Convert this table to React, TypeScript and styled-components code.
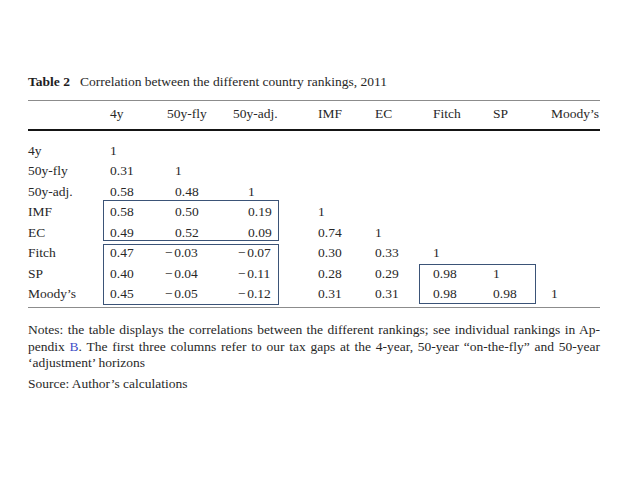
import React from "react";
import styled, { createGlobalStyle } from "styled-components";

const Global = createGlobalStyle`
  html, body { margin: 0; padding: 0; background: #ffffff; }
  body {
    font-family: "Liberation Serif", "Times New Roman", serif;
    color: #282828;
  }
`;

const COLS = "82px 57px 66px 85px 57px 58px 60px 58px 49px";

const Page = styled.div`
  width: 638px;
  height: 479px;
  box-sizing: border-box;
  padding: 74px 0 0 28px;
`;

const Figure = styled.div`
  width: 572px;
`;

const Caption = styled.div`
  font-size: 13.5px;
  line-height: 16px;
  margin-bottom: 10px;
  white-space: nowrap;
`;

const CaptionLabel = styled.span`
  font-weight: bold;
  margin-right: 10px;
  color: #1e1e1e;
`;

const HeaderRow = styled.div`
  display: grid;
  grid-template-columns: ${COLS};
  border-top: 1px solid #8c8c8c;
  border-bottom: 2px solid #151515;
  padding: 5px 0 7px;
  font-size: 13.5px;
  line-height: 16px;
`;

const HeadCell = styled.div`
  white-space: nowrap;
`;

const Body = styled.div`
  display: grid;
  grid-template-columns: ${COLS};
  grid-template-rows: repeat(8, 20.5px);
  padding: 9.75px 0 2.25px;
  border-bottom: 1px solid #8c8c8c;
  font-size: 13.5px;
  line-height: 20.5px;
`;

const Cell = styled.div<{ $row: number; $col: number; $off: number }>`
  grid-row: ${(p) => p.$row};
  grid-column: ${(p) => p.$col};
  padding-left: ${(p) => p.$off}px;
  white-space: nowrap;
`;

const Num = styled.span<{ $neg: boolean }>`
  display: inline-block;
  margin-left: ${(p) => (p.$neg ? -10 : 0)}px;
`;

const Minus = styled.span`
  margin-right: 1.5px;
`;

const Box = styled.div<{
  $rows: string;
  $cols: string;
  $m: string;
}>`
  grid-row: ${(p) => p.$rows};
  grid-column: ${(p) => p.$cols};
  margin: ${(p) => p.$m};
  border: 1.5px solid #3b5377;
  box-sizing: border-box;
  pointer-events: none;
`;

const Notes = styled.div`
  margin-top: 14px;
  font-size: 13.5px;
  line-height: 16.5px;
`;

const NoteLine = styled.span<{ $justify?: boolean }>`
  display: block;
  text-align: ${(p) => (p.$justify ? "justify" : "left")};
  text-align-last: ${(p) => (p.$justify ? "justify" : "left")};
  white-space: nowrap;
`;

const Source = styled.div`
  margin-top: 4px;
  font-size: 13.5px;
  line-height: 16.5px;
`;

const Link = styled.span`
  color: #3f4fc8;
`;

const headers = ["", "4y", "50y-fly", "50y-adj.", "IMF", "EC", "Fitch", "SP", "Moody\u2019s"];
const offsets = [0, 0, 8, 15, 0, 0, 0, 0, 0];

const rows: [string, string[]][] = [
  ["4y", ["1"]],
  ["50y-fly", ["0.31", "1"]],
  ["50y-adj.", ["0.58", "0.48", "1"]],
  ["IMF", ["0.58", "0.50", "0.19", "1"]],
  ["EC", ["0.49", "0.52", "0.09", "0.74", "1"]],
  ["Fitch", ["0.47", "-0.03", "-0.07", "0.30", "0.33", "1"]],
  ["SP", ["0.40", "-0.04", "-0.11", "0.28", "0.29", "0.98", "1"]],
  ["Moody\u2019s", ["0.45", "-0.05", "-0.12", "0.31", "0.31", "0.98", "0.98", "1"]],
];

const Value: React.FC<{ v: string }> = ({ v }) => {
  const neg = v.startsWith("-");
  return (
    <Num $neg={neg}>
      {neg && <Minus>{"\u2212"}</Minus>}
      {neg ? v.slice(1) : v}
    </Num>
  );
};

export default function App() {
  return (
    <>
      <Global />
      <Page>
        <Figure>
          <Caption>
            <CaptionLabel>Table 2</CaptionLabel>
            Correlation between the different country rankings, 2011
          </Caption>
          <HeaderRow>
            {headers.map((h, i) => (
              <HeadCell key={i}>{h}</HeadCell>
            ))}
          </HeaderRow>
          <Body>
            {rows.map(([label, vals], r) => (
              <React.Fragment key={label}>
                <Cell $row={r + 1} $col={1} $off={0}>
                  {label}
                </Cell>
                {vals.map((v, c) => (
                  <Cell key={c} $row={r + 1} $col={c + 2} $off={offsets[c + 1]}>
                    <Value v={v} />
                  </Cell>
                ))}
              </React.Fragment>
            ))}
            <Box $rows="4 / 6" $cols="2 / 5" $m="-2px 39px 2px -7px" />
            <Box $rows="6 / 9" $cols="2 / 5" $m="1px 39px 0 -7px" />
            <Box $rows="7 / 9" $cols="7 / 9" $m="0.5px 15px 1px -14px" />
          </Body>
          <Notes>
            <NoteLine $justify>
              Notes: the table displays the correlations between the different rankings; see individual rankings in Ap-
            </NoteLine>
            <NoteLine $justify>
              pendix <Link>B</Link>. The first three columns refer to our tax gaps at the 4-year, 50-year
              {" \u201Con-the-fly\u201D"} and 50-year
            </NoteLine>
            <NoteLine>{"\u2018adjustment\u2019 horizons"}</NoteLine>
          </Notes>
          <Source>Source: Author{"\u2019"}s calculations</Source>
        </Figure>
      </Page>
    </>
  );
}
